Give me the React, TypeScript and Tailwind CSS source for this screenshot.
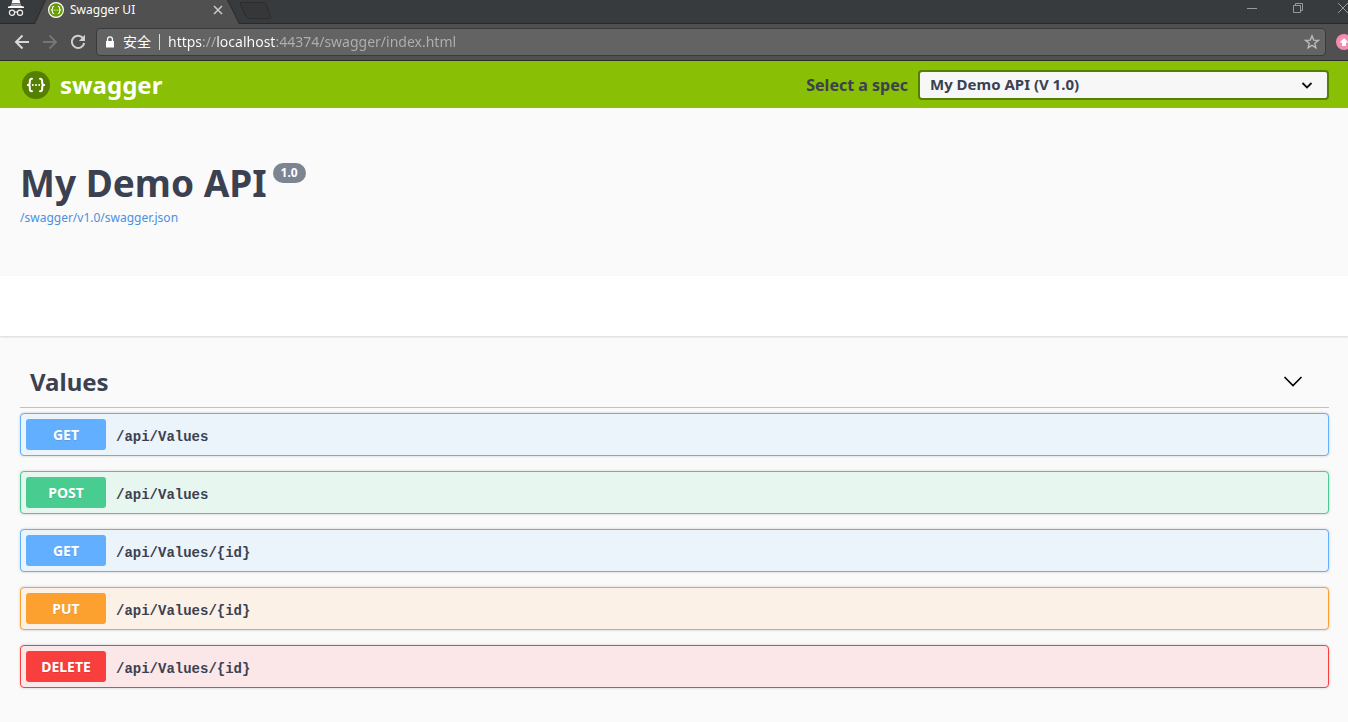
import type { ReactNode } from "react";

type Operation = { method: string; path: string; row: string; badge: string };

const operations: Operation[] = [
  { method: "GET", path: "/api/Values", row: "border-[#61affe] bg-[#ebf3fb]", badge: "bg-[#61affe]" },
  { method: "POST", path: "/api/Values", row: "border-[#49cc90] bg-[#e8f6f0]", badge: "bg-[#49cc90]" },
  { method: "GET", path: "/api/Values/{id}", row: "border-[#61affe] bg-[#ebf3fb]", badge: "bg-[#61affe]" },
  { method: "PUT", path: "/api/Values/{id}", row: "border-[#fca130] bg-[#fbf1e6]", badge: "bg-[#fca130]" },
  { method: "DELETE", path: "/api/Values/{id}", row: "border-[#f93e3e] bg-[#fbe7e7]", badge: "bg-[#f93e3e]" },
];

function IconButton({ label, className, children }: { label: string; className?: string; children: ReactNode }) {
  return (
    <button type="button" aria-label={label} className={"flex shrink-0 items-center justify-center " + (className ?? "")}>
      {children}
    </button>
  );
}

function Braces() {
  return (
    <g fill="none" stroke="#fff" strokeWidth="2" strokeLinecap="round" strokeLinejoin="round">
      <path d="M10 7.800C8.200 7.800 7.800 8.700 7.800 10.300V12C7.800 13.300 7.200 14 5.800 14c1.400 0 2 .7 2 2v1.700c0 1.600.4 2.500 2.200 2.500" />
      <path d="M18 7.800c1.800 0 2.200.9 2.200 2.500V12c0 1.300.6 2 2 2-1.400 0-2 .7-2 2v1.700c0 1.600-.4 2.500-2.200 2.500" />
      <path d="M10.800 14h.01M14 14h.01M17.200 14h.01" />
    </g>
  );
}

function TabStrip() {
  return (
    <div className="flex h-6 items-start border-b border-[#28292a] bg-[#383b3d]">
      <svg className="ml-2 h-5 w-4 shrink-0" viewBox="0 0 16 20" aria-hidden="true">
        <path d="M4.500 0h7l.8 3H3.700z" fill="#fff" />
        <path d="M3.500 3.500h9l.5 2H3z" fill="#aaa" />
        <path d="M3 5.800h10l3 1v1.300H0V6.800z" fill="#fff" />
        <g fill="none" stroke="#eee" strokeWidth="1.200">
          <circle cx="4" cy="12.700" r="2.600" />
          <circle cx="12" cy="12.700" r="2.600" />
          <path d="M6.600 12.300q1.400-1 2.800 0" />
        </g>
      </svg>
      <div className="ml-2.5 flex h-6 w-[206px] shrink-0 bg-[#28292a] [clip-path:polygon(11px_0,194px_0,100%_100%,0_100%)]">
        <div className="flex h-6 w-full items-center bg-[#505050] pb-1 pl-3.5 pr-3.5 [clip-path:polygon(12px_0,193px_0,205px_100%,1px_100%)]">
          <svg className="h-4 w-4 shrink-0" viewBox="0 0 28 28" aria-hidden="true">
            <circle cx="14" cy="14" r="13" fill="#6a9c0a" stroke="#fff" strokeWidth="2" />
            <Braces />
          </svg>
          <span className="ml-1.5 flex-1 text-xs text-white">Swagger UI</span>
          <IconButton label="Close tab" className="h-4 w-4">
            <svg className="h-4 w-4" viewBox="0 0 16 16" aria-hidden="true">
              <path d="M4 4l8 8M12 4l-8 8" stroke="#c8c8c8" strokeWidth="1.600" />
            </svg>
          </IconButton>
        </div>
      </div>
      <IconButton label="New tab" className="h-5 w-9">
        <svg className="h-5 w-9" viewBox="0 0 36 20" aria-hidden="true">
          <path d="M.5 2.500h22q2.500 0 3.500 2l4.500 12q.5 2-1.500 2H9q-2 0-3-2L.2 4z" fill="#373737" stroke="#2b2d2e" />
        </svg>
      </IconButton>
      <div className="ml-auto flex h-4 items-center">
        <IconButton label="Minimize" className="h-4 w-11">
          <svg className="h-4 w-4" viewBox="0 0 16 16" aria-hidden="true">
            <path d="M3 8.500h10" stroke="#999" />
          </svg>
        </IconButton>
        <IconButton label="Restore" className="h-4 w-12">
          <svg className="h-4 w-4" viewBox="0 0 16 16" aria-hidden="true" fill="none" stroke="#999">
            <path d="M3.500 5.500h7v7h-7zM5.500 5.500v-2h7v7h-2" />
          </svg>
        </IconButton>
        <IconButton label="Close" className="ml-2.5 h-4 w-4">
          <svg className="h-4 w-4" viewBox="0 0 16 16" aria-hidden="true">
            <path d="M6 3l10 10M16 3L6 13" stroke="#999" />
          </svg>
        </IconButton>
      </div>
    </div>
  );
}

function AddressBar() {
  return (
    <div className="flex h-[37px] items-center border-b border-[#2d2d2d] bg-[#505050] pl-3.5">
      <IconButton label="Back" className="h-4 w-4">
        <svg className="h-4 w-4" viewBox="0 0 16 16" aria-hidden="true">
          <path d="M15 8H2M8.500 1.500L2 8l6.500 6.500" fill="none" stroke="#d8d8d8" strokeWidth="2" />
        </svg>
      </IconButton>
      <IconButton label="Forward" className="ml-3 h-4 w-4">
        <svg className="h-4 w-4" viewBox="0 0 16 16" aria-hidden="true">
          <path d="M1 8h13M7.500 1.500L14 8l-6.500 6.500" fill="none" stroke="#757575" strokeWidth="2" />
        </svg>
      </IconButton>
      <IconButton label="Reload" className="ml-3 h-4 w-4">
        <svg className="h-4 w-4" viewBox="0 0 16 16" aria-hidden="true">
          <path d="M13.300 4.500A6.200 6.200 0 1 0 14.200 9" fill="none" stroke="#d0d0d0" strokeWidth="2" />
          <path d="M15 0.800V7H8.800z" fill="#d0d0d0" />
        </svg>
      </IconButton>
      <div className="ml-2.5 flex h-7 flex-1 items-center rounded-sm border border-[#3a3a3a] bg-[#636363] pl-2 pr-[5px]">
        <svg className="h-3 w-2.5 shrink-0" viewBox="0 0 10 12" aria-hidden="true">
          <path d="M1 5h8v6.500H1z" fill="#fff" />
          <path d="M2.600 5.500V3.200a2.400 2.400 0 0 1 4.800 0v2.300" fill="none" stroke="#fff" strokeWidth="1.300" />
        </svg>
        <span className="ml-2 text-sm text-white">安全</span>
        <span className="mx-2 h-4 w-px bg-[#ddd]" />
        <input
          aria-label="Address"
          type="text"
          spellCheck={false}
          defaultValue="https://localhost:44374/swagger/index.html"
          className="h-6 min-w-0 flex-1 bg-[linear-gradient(90deg,#fff_34px,#b0b0b0_34px,#b0b0b0_48px,#fff_48px,#fff_107px,#b0b0b0_107px)] bg-clip-text pb-0.5 text-sm text-transparent caret-white outline-none"
        />
        <IconButton label="Bookmark this page" className="h-4 w-4">
          <svg className="h-4 w-4" viewBox="0 0 16 16" aria-hidden="true">
            <path d="M8 1.800l1.700 4.300 4.600.3-3.500 2.900 1.100 4.500L8 11.300l-3.900 2.500 1.100-4.500-3.500-2.900 4.600-.3z" fill="none" stroke="#bbb" strokeWidth="1.400" />
          </svg>
        </IconButton>
      </div>
      <IconButton label="Extension" className="ml-2.5 h-4 w-3">
        <svg className="h-4 w-3" viewBox="0 0 12 16" aria-hidden="true">
          <circle cx="8" cy="8" r="8" fill="#f48cb1" />
          <path d="M8 4l4.500 4.500H10V12H6V8.500H3.500z" fill="#fff" />
        </svg>
      </IconButton>
    </div>
  );
}

function Topbar() {
  return (
    <header className="flex h-[47px] items-center bg-[#89bf04] pl-5 pr-[19px]">
      <a href="#top" className="flex items-center">
        <svg className="ml-0.5 h-7 w-7" viewBox="0 0 28 28" aria-hidden="true">
          <circle cx="14" cy="14" r="14" fill="#547f00" />
          <Braces />
        </svg>
        <span className="ml-2.5 text-2xl font-bold text-white">swagger</span>
      </a>
      <label htmlFor="spec" className="ml-auto text-base font-bold text-[#3b4151]">
        Select a spec
      </label>
      <div className="relative ml-2.5 w-[411px]">
        <select
          id="spec"
          className="h-[30px] w-full appearance-none rounded border-2 border-[#547f00] bg-[#f7f7f7] px-2.5 text-[15px] font-bold text-[#3b4151]"
        >
          <option>My Demo API (V 1.0)</option>
        </select>
        <svg className="pointer-events-none absolute right-4 top-2 h-4 w-3" viewBox="0 0 12 16" aria-hidden="true">
          <path d="M1.500 5l4.500 4.500L10.500 5" fill="none" stroke="#111" strokeWidth="1.800" />
        </svg>
      </div>
    </header>
  );
}

export default function App() {
  return (
    <div id="top" className="min-h-screen bg-[#fafafa] font-['Noto_Sans','Noto_Sans_CJK_SC',sans-serif] text-[#3b4151]">
      <TabStrip />
      <AddressBar />
      <Topbar />
      <section className="px-5 pb-12 pt-[50px]">
        <div className="flex items-start">
          <h1 className="text-[37px] leading-[50px] font-bold">My Demo API</h1>
          <span className="ml-1.5 mt-[5px] flex h-5 items-center rounded-full bg-[#7d8492] px-2 text-xs font-bold text-white">1.0</span>
        </div>
        <a href="#spec-json" className="block text-xs leading-5 text-[#4990e2]">
          /swagger/v1.0/swagger.json
        </a>
      </section>
      <div className="h-[60px] bg-white shadow-[0_1px_2px_rgba(0,0,0,0.15)]" />
      <main className="pl-5 pr-[19px] pt-5">
        <button type="button" className="flex h-[52px] w-full items-center justify-between border-b border-[#bfc0c3] pl-2.5 pr-[26px]">
          <h2 className="text-2xl font-bold">Values</h2>
          <svg className="h-5 w-5" viewBox="0 0 20 20" aria-hidden="true">
            <path d="M1.500 5l8.500 8.500L18.500 5" fill="none" stroke="#000" strokeWidth="1.600" />
          </svg>
        </button>
        <ul className="mt-[5px] flex flex-col gap-[15px]">
          {operations.map((op, i) => (
            <li key={i}>
              <button
                type="button"
                className={"flex h-[43px] w-full items-center rounded border p-[5px] text-left shadow-[0_0_3px_rgba(0,0,0,0.19)] " + op.row}
              >
                <span
                  className={
                    "flex h-[31px] min-w-20 items-center justify-center rounded-[3px] px-[15px] text-sm font-bold text-white [text-shadow:0_1px_0_rgba(0,0,0,0.1)] " +
                    op.badge
                  }
                >
                  {op.method}
                </span>
                <span className="px-2.5 pt-1 font-['Liberation_Mono',monospace] text-sm font-bold">{op.path}</span>
              </button>
            </li>
          ))}
        </ul>
      </main>
    </div>
  );
}
